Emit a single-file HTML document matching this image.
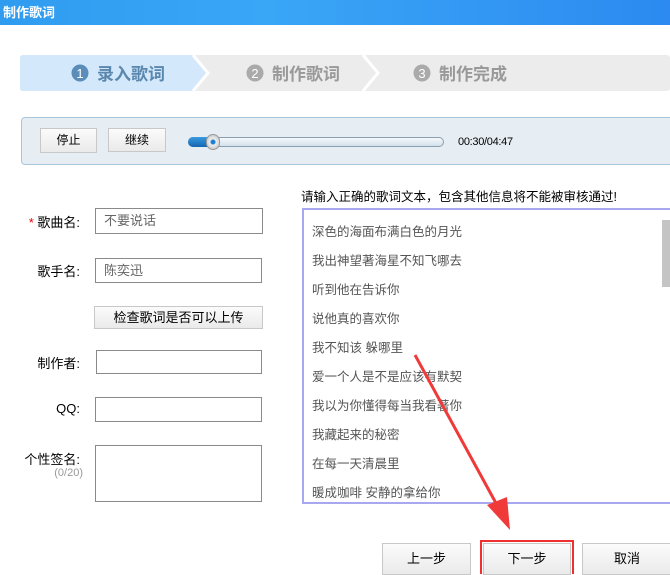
<!DOCTYPE html><html><head><meta charset="utf-8"><style>
*{margin:0;padding:0;box-sizing:border-box}
body{width:670px;height:572px;overflow:hidden;background:#fff;position:relative;font-family:"Liberation Sans","Noto Sans CJK SC",sans-serif;font-size:12px;color:#000}
.a{position:absolute}
.title{left:0;top:0;width:670px;height:25px;background:linear-gradient(90deg,#2f9cf0,#3aa6f6 40%,#2c8af0);color:#fff;font-weight:bold;font-size:13px;line-height:25px;padding-left:3px}
.btn{position:absolute;background:linear-gradient(#fbfbfb,#eaeaea);border:1px solid #c8c8c8;text-align:center;font-size:12px}
.inp{position:absolute;border:1px solid #8a8a8a;background:#fff;color:#666;font-size:13px;padding-left:8px}
.lbl{position:absolute;right:590px;font-size:13px;white-space:nowrap}
.ly{position:absolute;left:312px;font-size:12.5px;color:#555}
</style></head><body>
<div class="a title">制作歌词</div>
<svg class="a" style="left:20px;top:55px" width="650" height="36">
<rect x="0" y="0" width="650" height="36" rx="3" fill="#ececec"/>
<path d="M3 0H173L188 18L173 36H3Q0 36 0 33V3Q0 0 3 0Z" fill="#d3e8fb"/>
<path d="M173 0L188 18L173 36" stroke="#fff" stroke-width="3" fill="none"/>
<path d="M343 0L358 18L343 36" stroke="#fff" stroke-width="3" fill="none"/>
<circle cx="60" cy="18" r="8.5" fill="#5b8db8"/><text x="60" y="23" fill="#fff" font-size="13" text-anchor="middle" font-family="Liberation Sans">1</text>
<text x="77" y="25" fill="#5a87ad" font-size="17" font-weight="bold" font-family="Noto Sans CJK SC">录入歌词</text>
<circle cx="235" cy="18" r="8.5" fill="#aaa"/><text x="235" y="23" fill="#fff" font-size="13" text-anchor="middle" font-family="Liberation Sans">2</text>
<text x="252" y="25" fill="#999" font-size="17" font-weight="bold" font-family="Noto Sans CJK SC">制作歌词</text>
<circle cx="402" cy="18" r="8.5" fill="#aaa"/><text x="402" y="23" fill="#fff" font-size="13" text-anchor="middle" font-family="Liberation Sans">3</text>
<text x="419" y="25" fill="#999" font-size="17" font-weight="bold" font-family="Noto Sans CJK SC">制作完成</text>
</svg>
<div class="a" style="left:21px;top:117px;width:660px;height:48px;background:#e6eef4;border:1px solid #a9c6da;border-radius:4px"></div>
<div class="btn" style="left:40px;top:128px;width:57px;height:25px;line-height:23px">停止</div>
<div class="btn" style="left:108px;top:128px;width:58px;height:24px;line-height:22px">继续</div>
<div class="a" style="left:188px;top:137px;width:256px;height:10px;border:1px solid #8aa0b0;border-radius:5px;background:linear-gradient(#f4f8fb,#d4e0ea)"></div>
<div class="a" style="left:188px;top:137px;width:28px;height:10px;border-radius:5px 0 0 5px;background:linear-gradient(#3a9ae0,#1466b0)"></div>
<div class="a" style="left:206px;top:134px;width:14px;height:16px;border-radius:7px;background:radial-gradient(circle,#1a7fd8 2px,#eee 3px,#bbb);border:1px solid #999"></div>
<div class="a" style="left:458px;top:136px;font-size:11px;letter-spacing:-0.3px">00:30/04:47</div>
<div class="lbl" style="top:212px"><span style="color:#e00">* </span>歌曲名:</div>
<div class="inp" style="left:95px;top:208px;width:168px;height:26px;line-height:24px">不要说话</div>
<div class="lbl" style="top:261px">歌手名:</div>
<div class="inp" style="left:95px;top:258px;width:167px;height:25px;line-height:23px">陈奕迅</div>
<div class="btn" style="left:94px;top:306px;width:169px;height:23px;line-height:21px;font-size:13px">检查歌词是否可以上传</div>
<div class="lbl" style="top:353px">制作者:</div>
<div class="inp" style="left:96px;top:350px;width:166px;height:24px"></div>
<div class="lbl" style="top:401px">QQ:</div>
<div class="inp" style="left:95px;top:397px;width:167px;height:25px"></div>
<div class="lbl" style="top:449px">个性签名:</div>
<div class="a" style="right:587px;top:467px;color:#999;font-size:11px">(0/20)</div>
<div class="inp" style="left:95px;top:445px;width:167px;height:57px"></div>
<div class="a" style="left:301px;top:186px;font-size:12.5px">请输入正确的歌词文本，包含其他信息将不能被审核通过!</div>
<div class="a" style="left:302px;top:208px;width:370px;height:296px;border:2px solid #a8a8f0"></div>
<div class="a" style="left:662px;top:220px;width:8px;height:67px;background:#c4c4c4"></div>
<div class="ly" style="top:221px">深色的海面布满白色的月光</div>
<div class="ly" style="top:250px">我出神望著海星不知飞哪去</div>
<div class="ly" style="top:279px">听到他在告诉你</div>
<div class="ly" style="top:308px">说他真的喜欢你</div>
<div class="ly" style="top:337px">我不知该 躲哪里</div>
<div class="ly" style="top:366px">爱一个人是不是应该有默契</div>
<div class="ly" style="top:395px">我以为你懂得每当我看著你</div>
<div class="ly" style="top:424px">我藏起来的秘密</div>
<div class="ly" style="top:453px">在每一天清晨里</div>
<div class="ly" style="top:482px">暖成咖啡 安静的拿给你</div>
<div class="btn" style="left:382px;top:543px;width:89px;height:32px;line-height:30px;font-size:13px">上一步</div>
<div class="btn" style="left:483px;top:543px;width:88px;height:32px;line-height:30px;font-size:13px">下一步</div>
<div class="a" style="left:480px;top:540px;width:94px;height:34px;border:2px solid #f03030;border-bottom:none"></div>
<div class="btn" style="left:582px;top:543px;width:90px;height:32px;line-height:30px;font-size:13px">取消</div>
<svg class="a" style="left:0;top:0" width="670" height="572">
<line x1="415" y1="355" x2="497" y2="505" stroke="#f03a3a" stroke-width="3"/>
<path d="M487 505L510 530L507 497Z" fill="#f03a3a"/>
</svg>
</body></html>
